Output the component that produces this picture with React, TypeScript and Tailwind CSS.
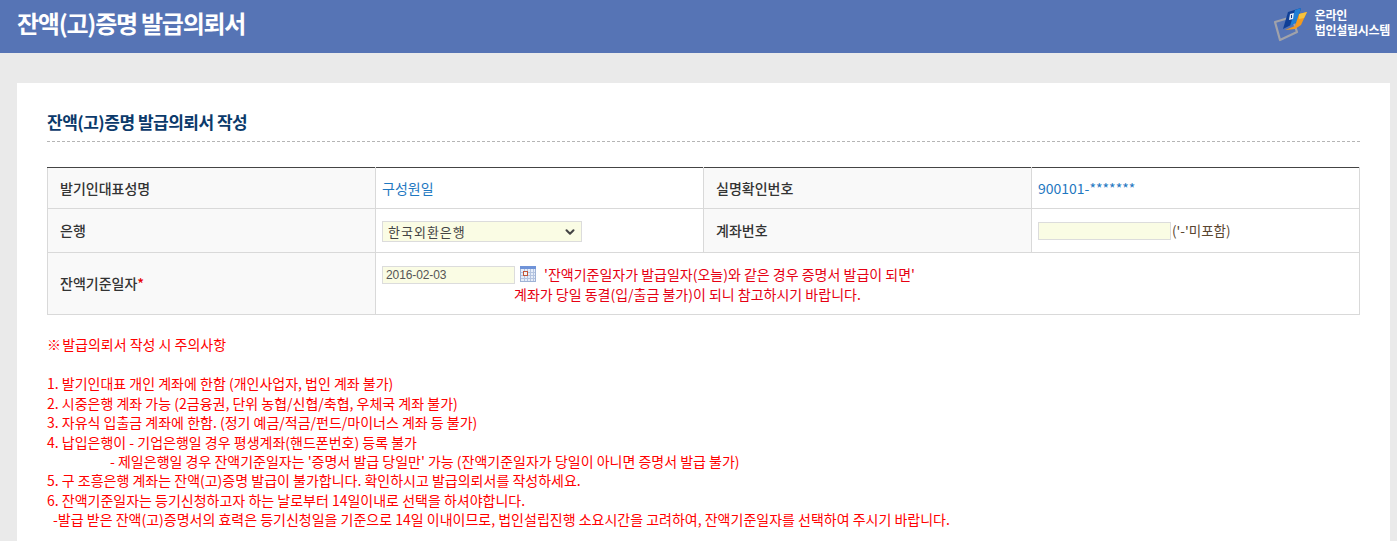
import { ChevronDown } from 'lucide-react'

const fontStack = 'font-["Noto_Sans_CJK_KR","Noto_Sans",sans-serif]'
const thClass = 'border border-[#d9d9d9] bg-[#f9f9f9] px-3 text-left text-[14px] font-medium text-[#333] align-middle'
const tdClass = 'border border-[#d9d9d9] bg-white px-[6px] text-[14px] align-middle'

// 주의사항 목록
const notes = [
  '1. 발기인대표 개인 계좌에 한함 (개인사업자, 법인 계좌 불가)',
  '2. 시중은행 계좌 가능 (2금융권, 단위 농협/신협/축협, 우체국 계좌 불가)',
  '3. 자유식 입출금 계좌에 한함. (정기 예금/적금/펀드/마이너스 계좌 등 불가)',
  '4. 납입은행이 - 기업은행일 경우 평생계좌(핸드폰번호) 등록 불가',
]

function LogoIcon() {
  return (
    <svg width="40" height="40" viewBox="0 0 40 40" className="shrink-0">
      <path d="M5 18 L22 13 L27 28 L10 36 Z" fill="none" stroke="#a0a2aa" strokeWidth="2.200" strokeLinejoin="round" />
      <path d="M18 8 L31 4 L27 18 L13 25 Z" fill="#0f3f96" />
      <path d="M25 6 L31 4 L27 18 L20 22 Z" fill="#1f7fd6" />
      <path d="M20 10 L24 9 L23 15 L19 16 Z" fill="#dfeaf8" />
      <path d="M21 11 H22 V14 H21 Z" fill="#12357f" />
      <path d="M15 26 L25 22 L29 10 L37 8 L31 21 L25 25 Z" fill="#f39a1e" />
      <path d="M29 10 L37 8 L34 14 L29 15 Z" fill="#f7c23c" />
    </svg>
  )
}

function CalendarIcon() {
  return (
    <svg width="16" height="16" viewBox="0 0 16 16" className="shrink-0">
      <rect x="0.500" y="0.500" width="15" height="15" fill="#e6edf9" stroke="#9fb3d6" />
      <rect x="0" y="0" width="16" height="3" fill="#6f93d8" />
      <path d="M1 6.500 H15 M1 9.500 H15 M1 12.500 H15 M4.500 3 V15 M7.500 3 V15 M10.500 3 V15 M13.500 3 V15" stroke="#b4c4e0" strokeWidth="1" />
      <rect x="3.500" y="5.500" width="4" height="4" fill="#f4f4f4" stroke="#c0563a" />
    </svg>
  )
}

export default function App() {
  return (
    <div className={`h-[541px] overflow-hidden bg-[#eaeaea] ${fontStack}`}>
      {/* 상단 헤더 */}
      <header className="h-[53px] bg-[#5674b5] pl-[17px] pr-[7px] flex items-center justify-between">
        <h1 className="text-[24px] font-bold tracking-[-1.250px] text-white pb-[8px]">잔액(고)증명 발급의뢰서</h1>
        <div className="flex items-center gap-[5px] pb-[5px]">
          <LogoIcon />
          <div className="mb-[4px] text-[12px] leading-[15px] font-bold text-white tracking-[-0.300px]">
            온라인<br />법인설립시스템
          </div>
        </div>
      </header>

      <main className="mt-[30px] ml-[17px] mr-[7px] bg-white px-[30px] pt-[26px] h-[500px]">
        <h2 className="text-[17px] leading-[25px] font-bold text-[#0b3a6b] tracking-[-0.500px]">잔액(고)증명 발급의뢰서 작성</h2>
        <div className="mt-[7px] border-t border-dashed border-[#b5b5b5]" />

        <table className="mt-[25px] w-[1313px] table-fixed border-collapse">
          <tbody>
            <tr className="h-[41px]">
              <th className={`${thClass} w-[328px] border-t-[#444]`}>발기인대표성명</th>
              <td className={`${tdClass} w-[328px] border-t-[#444] text-[#1f78c1]`}>구성원일</td>
              <th className={`${thClass} w-[328px] border-t-[#444]`}>실명확인번호</th>
              <td className={`${tdClass} border-t-[#444] text-[#1f78c1]`}>900101-*******</td>
            </tr>
            <tr className="h-[44px]">
              <th className={thClass}>은행</th>
              <td className={tdClass}>
                <div className="mt-[2px] flex h-[21px] w-[200px] items-center justify-between border border-[#dcdcdc] bg-[#fafce4] pl-[5px] pr-[4px] text-[13px] tracking-[1px] text-[#444]">
                  한국외환은행
                  <ChevronDown size={14} strokeWidth={3.500} className="text-[#444]" />
                </div>
              </td>
              <th className={thClass}>계좌번호</th>
              <td className={tdClass}>
                <div className="flex items-center text-[13.500px] text-[#5a4630]">
                  <div className="h-[18px] w-[133px] border border-[#dcdcdc] bg-[#fafce4]" />
                  <span className="ml-[1px]">('-'미포함)</span>
                </div>
              </td>
            </tr>
            <tr className="h-[62px]">
              <th className={thClass}>
                잔액기준일자<span className="text-[#e60000]">*</span>
              </th>
              <td colSpan={3} className={tdClass}>
                <div className="flex items-start">
                  <div className="mt-[2px] flex h-[18px] w-[133px] items-center border border-[#dcdcdc] bg-[#fafce4] pl-[3px] font-['Liberation_Sans',sans-serif] text-[12px] tracking-[-0.100px] text-[#555]">
                    2016-02-03
                  </div>
                  <span className="ml-[5px] mt-[2px]"><CalendarIcon /></span>
                  <span className="ml-[8px] text-[14px] leading-[20px] text-[#e60012]">'잔액기준일자가 발급일자(오늘)와 같은 경우 증명서 발급이 되면'</span>
                </div>
                <div className="ml-[132px] text-[14px] leading-[20px] text-[#e60012]">계좌가 당일 동결(입/출금 불가)이 되니 참고하시기 바랍니다.</div>
              </td>
            </tr>
          </tbody>
        </table>

        {/* 주의사항 */}
        <div className="mt-[20px] text-[14px] leading-[19.400px] text-[#ff0000]">
          <p><span className="mr-[-2px]">※</span> 발급의뢰서 작성 시 주의사항</p>
          <p className="mt-[20px]">{notes[0]}</p>
          {notes.slice(1).map((note) => (
            <p key={note}>{note}</p>
          ))}
          <p className="pl-[63px]">- 제일은행일 경우 잔액기준일자는 '증명서 발급 당일만' 가능 (잔액기준일자가 당일이 아니면 증명서 발급 불가)</p>
          <p>5. 구 조흥은행 계좌는 잔액(고)증명 발급이 불가합니다. 확인하시고 발급의뢰서를 작성하세요.</p>
          <p>6. 잔액기준일자는 등기신청하고자 하는 날로부터 14일이내로 선택을 하셔야합니다.</p>
          <p className="pl-[6px]">-발급 받은 잔액(고)증명서의 효력은 등기신청일을 기준으로 14일 이내이므로, 법인설립진행 소요시간을 고려하여, 잔액기준일자를 선택하여 주시기 바랍니다.</p>
        </div>
      </main>
    </div>
  )
}
